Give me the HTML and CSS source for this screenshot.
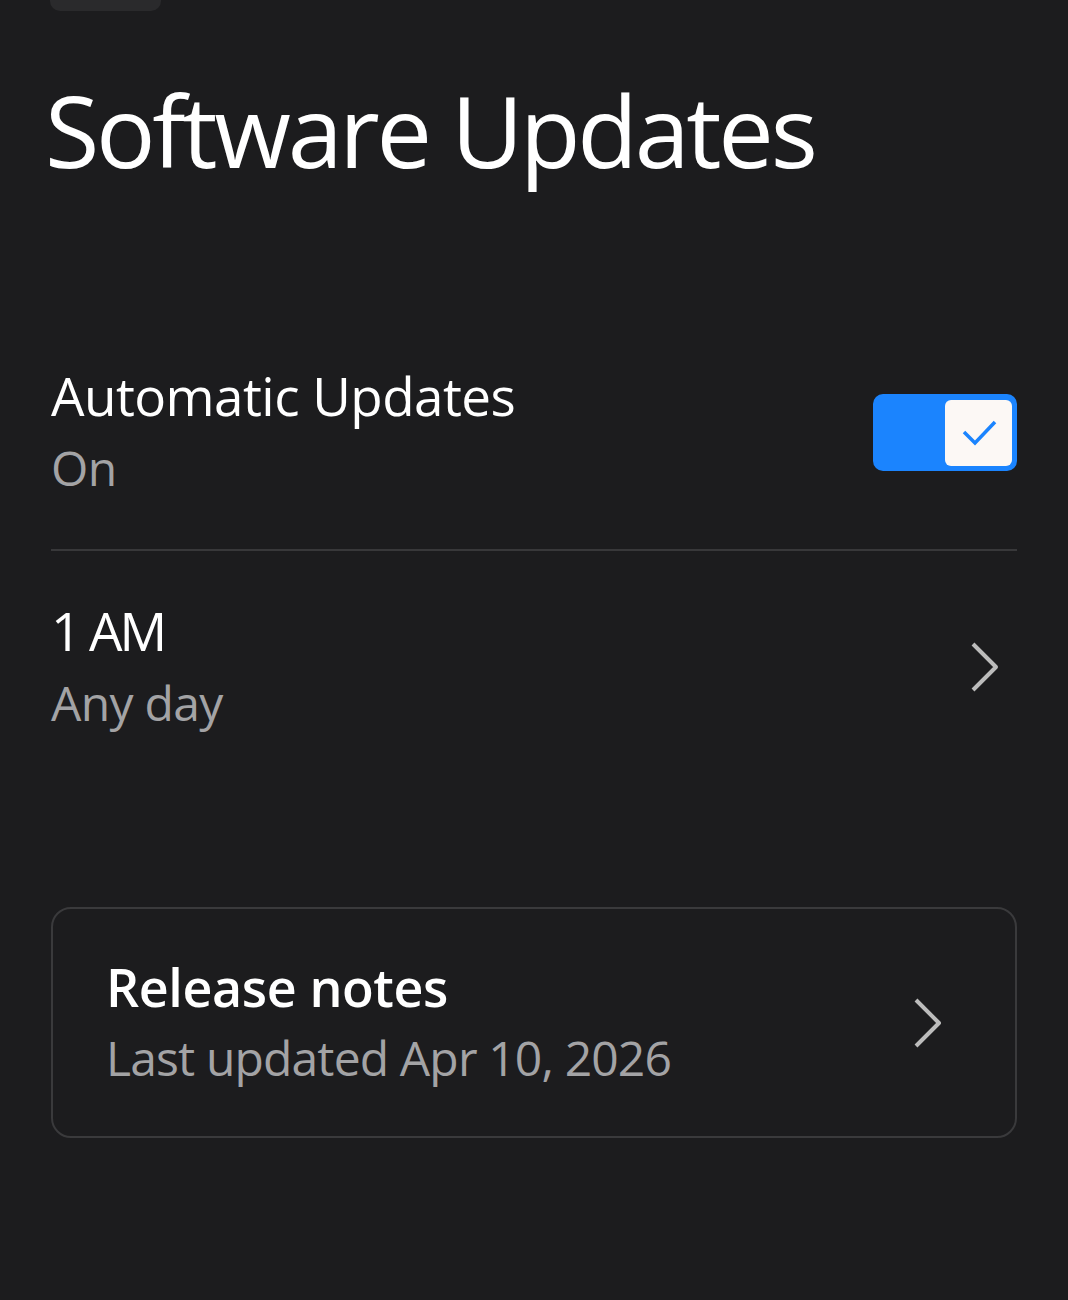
FILE: index.html
```html
<!DOCTYPE html>
<html lang="en">
<head>
<meta charset="utf-8">
<title>Software Updates</title>
<link rel="stylesheet" href="styles.css">
</head>
<body>
<div class="page">
  <div class="handle"></div>
  <h1 class="title">Software Updates</h1>

  <div class="row row-auto">
    <div class="row-text">
      <div class="row-label">Automatic Updates</div>
      <div class="row-sub">On</div>
    </div>
    <div class="toggle">
      <div class="knob">
        <svg width="40" height="30" viewBox="0 0 40 30"><polyline points="5,14 16,25 36,4" fill="none" stroke="#1b84fe" stroke-width="3.5" stroke-linecap="butt" stroke-linejoin="miter"/></svg>
      </div>
    </div>
  </div>

  <div class="divider"></div>

  <div class="row row-time">
    <div class="row-text">
      <div class="row-label row-label-time">1 AM</div>
      <div class="row-sub">Any day</div>
    </div>
    <svg class="chevron" width="32" height="52" viewBox="0 0 32 52"><polyline points="4,3 27,26 4,49" fill="none" stroke="#bcbcbc" stroke-width="4" stroke-linejoin="round"/></svg>
  </div>

  <div class="card">
    <div class="card-text">
      <div class="card-label">Release notes</div>
      <div class="card-sub">Last updated Apr 10, 2026</div>
    </div>
    <svg class="chevron" width="32" height="52" viewBox="0 0 32 52"><polyline points="4,3 27,26 4,49" fill="none" stroke="#bcbcbc" stroke-width="4" stroke-linejoin="round"/></svg>
  </div>
</div>
</body>
</html>
```

FILE: styles.css
```css
html, body {
  margin: 0;
  padding: 0;
  background: #1c1c1e;
}

body {
  font-family: "Open Sans", "Noto Sans", sans-serif;
  color: #ffffff;
}

.page {
  padding: 0 51px;
}

.handle {
  width: 111px;
  height: 21px;
  margin-top: -10px;
  margin-left: -1px;
  background: #2a2a2c;
  border-radius: 10px;
}

.title {
  margin: 59px 0 0 -6px;
  font-size: 99px;
  font-weight: 400;
  line-height: 120px;
  letter-spacing: -3.3px;
  color: #ffffff;
}

.row {
  display: flex;
  align-items: center;
  justify-content: space-between;
}

.row-auto {
  margin-top: 170px;
  padding-bottom: 45px;
}

.row-time {
  padding-top: 44px;
}

.row-label {
  font-size: 53px;
  line-height: 72px;
  letter-spacing: -0.55px;
  color: #ffffff;
}

.row-label-time {
  letter-spacing: -3px;
}

.row-sub {
  font-size: 48px;
  line-height: 72px;
  letter-spacing: -0.7px;
  color: #a3a3a5;
}

.toggle {
  width: 144px;
  height: 77px;
  box-sizing: border-box;
  padding: 6px 5px 5px 0;
  background: #1b84fe;
  border-radius: 10px;
  display: flex;
  justify-content: flex-end;
}

.knob {
  width: 67px;
  height: 66px;
  background: #fcf8f5;
  border-radius: 6px;
  display: flex;
  align-items: center;
  justify-content: center;
}

.divider {
  height: 2px;
  background: #38383a;
}

.chevron {
  display: block;
  margin-right: 16px;
}

.card {
  margin-top: 168px;
  border: 2px solid #3a3a3c;
  border-radius: 20px;
  padding: 43px 71px 42px 53px;
  display: flex;
  align-items: center;
  justify-content: space-between;
}

.card .chevron {
  margin-right: 0;
}

.card-label {
  font-size: 52px;
  font-weight: 600;
  line-height: 70px;
  letter-spacing: -0.4px;
  color: #ffffff;
}

.card-sub {
  font-size: 48px;
  line-height: 72px;
  letter-spacing: -0.85px;
  color: #a3a3a5;
}
```
